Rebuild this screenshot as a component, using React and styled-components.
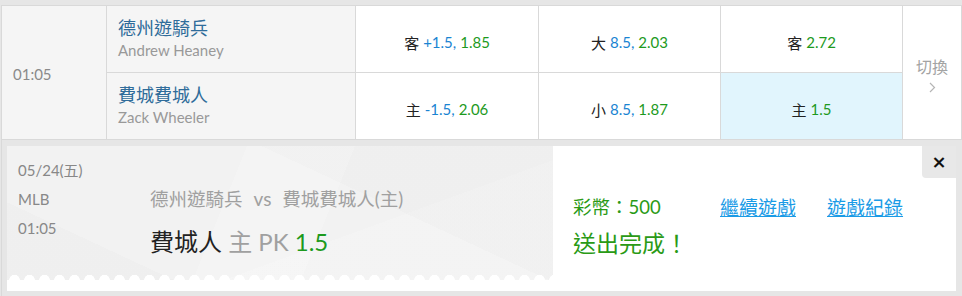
import React from "react";
import styled, { createGlobalStyle } from "styled-components";

const GlobalStyle = createGlobalStyle`
  body {
    margin: 0;
    background: #e6e6e6;
    font-family: Lato, "Noto Sans CJK TC", sans-serif;
  }
`;

const rows = [
  {
    team: "德州遊騎兵",
    pitcher: "Andrew Heaney",
    odds: [
      { side: "客", line: "+1.5,", price: "1.85" },
      { side: "大", line: "8.5,", price: "2.03" },
      { side: "客", price: "2.72" },
    ],
  },
  {
    team: "費城費城人",
    pitcher: "Zack Wheeler",
    odds: [
      { side: "主", line: "-1.5,", price: "2.06" },
      { side: "小", line: "8.5,", price: "1.87" },
      { side: "主", price: "1.5", active: true },
    ],
  },
];

function App() {
  return (
    <>
      <GlobalStyle />
      <Board>
        <TimeCell>01:05</TimeCell>
        {rows.map((row, i) => (
          <React.Fragment key={row.team}>
            <TeamCell>
              <TeamName>{row.team}</TeamName>
              <Pitcher>{row.pitcher}</Pitcher>
            </TeamCell>
            {row.odds.map((o, j) => (
              <OddsCell key={j} $active={o.active}>
                <Side>{o.side}</Side>
                {o.line && <Line>{o.line}</Line>}
                <Price>{o.price}</Price>
              </OddsCell>
            ))}
            {i === 0 && (
              <SwitchCell>
                <span>切換</span>
                <svg width="7" height="11" viewBox="0 0 7 11">
                  <path d="M1 1l4.5 4.5L1 10" fill="none" stroke="#b5b5b5" strokeWidth="1.2" />
                </svg>
              </SwitchCell>
            )}
          </React.Fragment>
        ))}
      </Board>

      <Bottom>
        <Panel>
          <Ticket>
            <MetaCol>
              <Meta>05/24(五)</Meta>
              <Meta>MLB</Meta>
              <Meta>01:05</Meta>
            </MetaCol>
            <PickCol>
              <Matchup>
                德州遊騎兵<Vs>vs</Vs>費城費城人(主)
              </Matchup>
              <Pick>
                <strong>費城人</strong> 主 PK <em>1.5</em>
              </Pick>
            </PickCol>
          </Ticket>

          <Result>
            <ResultRow>
              <Coins>彩幣：500</Coins>
              <ResultLink href="#">繼續遊戲</ResultLink>
              <ResultLink href="#">遊戲紀錄</ResultLink>
            </ResultRow>
            <Done>送出完成！</Done>
          </Result>

          <CloseButton type="button">×</CloseButton>
        </Panel>
      </Bottom>
    </>
  );
}

const Board = styled.div`
  margin: 5px 0 0 1px;
  width: 961px;
  box-sizing: border-box;
  display: grid;
  grid-template-columns: 104px 248px 182px 181px 181px 58px;
  grid-template-rows: 66px 66px;
  gap: 1px;
  padding: 1px;
  background: #d9d9d9;
`;

const TimeCell = styled.div`
  grid-row: span 2;
  background: #f5f5f5;
  display: flex;
  align-items: center;
  padding: 2px 0 0 11px;
  font-size: 15px;
  color: #8a8a8a;
`;

const TeamCell = styled.div`
  background: #f5f5f5;
  padding: 10px 0 0 11px;
`;

const TeamName = styled.div`
  font-size: 18px;
  line-height: 24px;
  color: #2f6c9a;
`;

const Pitcher = styled.div`
  font-size: 15px;
  line-height: 20px;
  color: #999;
`;

const OddsCell = styled.div`
  background: ${(p) => (p.$active ? "#e1f5fd" : "#fff")};
  display: flex;
  align-items: center;
  justify-content: center;
  gap: 4px;
  padding-top: 6px;
  font-size: 15px;
`;

const Side = styled.span`
  color: #222;
`;

const Line = styled.span`
  color: #1a84d2;
`;

const Price = styled.span`
  color: #1d9a1d;
`;

const SwitchCell = styled.div`
  grid-row: span 2;
  background: #fff;
  display: flex;
  flex-direction: column;
  align-items: center;
  justify-content: center;
  gap: 6px;
  padding-top: 6px;
  font-size: 16px;
  color: #a3a3a3;
  span {
    line-height: 18px;
  }
`;

const Bottom = styled.div`
  margin-left: 1px;
  border-left: 1px solid #d9d9d9;
  padding: 6px 6px 6px 5px;
`;

const Panel = styled.div`
  position: relative;
  width: 949px;
  height: 145px;
  background: #fff;
  display: flex;
`;

const Ticket = styled.div`
  position: relative;
  width: 546px;
  height: 134px;
  box-sizing: border-box;
  padding: 10px 0 0 11px;
  display: flex;
  background:
    linear-gradient(112deg, rgba(255, 255, 255, 0) 40%, rgba(255, 255, 255, 0.16) 40%, rgba(255, 255, 255, 0.16) 58%, rgba(255, 255, 255, 0) 58%),
    linear-gradient(205deg, rgba(0, 0, 0, 0.012) 35%, rgba(0, 0, 0, 0) 35%),
    linear-gradient(160deg, rgba(255, 255, 255, 0) 64%, rgba(255, 255, 255, 0.14) 64%),
    linear-gradient(25deg, rgba(0, 0, 0, 0.01) 20%, rgba(0, 0, 0, 0) 20%),
    #f2f2f2;
  &::after {
    content: "";
    position: absolute;
    left: 0;
    right: 0;
    bottom: 0;
    height: 5px;
    background: radial-gradient(circle at 50% 100%, #fff 5px, rgba(255, 255, 255, 0) 5.5px) 0 0 / 15px 5px repeat-x;
  }
`;

const MetaCol = styled.div`
  width: 132px;
  display: flex;
  flex-direction: column;
`;

const Meta = styled.div`
  font-size: 15px;
  line-height: 29px;
  color: #888;
`;

const PickCol = styled.div`
  padding-top: 29px;
`;

const Matchup = styled.div`
  font-size: 18.5px;
  line-height: 28px;
  color: #a0a0a0;
`;

const Vs = styled.span`
  margin: 0 11px;
  font-size: 19px;
`;

const Pick = styled.div`
  margin-top: 13px;
  font-size: 24px;
  line-height: 32px;
  color: #a0a0a0;
  strong {
    font-weight: normal;
    color: #222;
  }
  em {
    font-style: normal;
    color: #1d9a1d;
  }
`;

const Result = styled.div`
  padding: 47px 0 0 20px;
`;

const ResultRow = styled.div`
  display: flex;
  align-items: center;
  height: 26px;
`;

const Coins = styled.span`
  width: 147px;
  font-size: 18.5px;
  color: #2a9a16;
`;

const ResultLink = styled.a`
  margin-right: 31px;
  font-size: 19px;
  color: #1a9be6;
  text-decoration: underline;
`;

const Done = styled.div`
  margin-top: 9px;
  font-size: 23px;
  line-height: 30px;
  color: #2a9a16;
`;

const CloseButton = styled.button`
  position: absolute;
  top: 0;
  right: 0;
  width: 34px;
  height: 32px;
  border: none;
  padding: 0;
  border-bottom-left-radius: 4px;
  background: #e8e8e8;
  font-family: "DejaVu Sans", sans-serif;
  font-size: 18px;
  font-weight: bold;
  line-height: 30px;
  color: #111;
  cursor: pointer;
`;

export default App;
